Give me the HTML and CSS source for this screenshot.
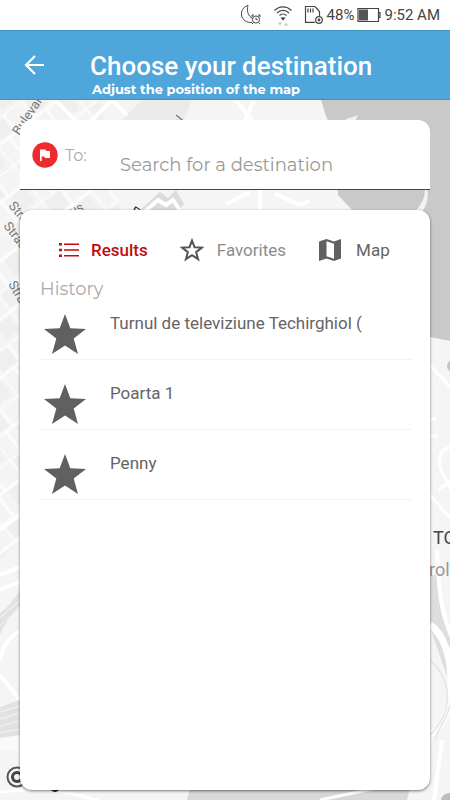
FILE: index.html
```html
<!DOCTYPE html>
<html lang="en">
<head>
<meta charset="utf-8">
<meta name="viewport" content="width=device-width, initial-scale=1">
<title>Choose your destination</title>
<link rel="stylesheet" href="styles.css">
</head>
<body>
<div class="status">
  <svg class="moon" width="22" height="22" viewBox="0 0 22 22" fill="none" stroke="#444">
    <path d="M8 1.500C3 3 1 7 1.500 11c.7 5 5.500 8 10.500 7.500M8 1.500C6.500 7 8 12 12.500 14.500"/>
    <circle cx="16" cy="15.500" r="3.600"/><path d="M16 13.500v2.200h1.700M12 13v-2h2M18 11h2v2M13 19l-1 1M19 19l1 1"/>
  </svg>
  <svg class="wifi" width="20" height="22" viewBox="0 0 20 22" fill="none" stroke="#444" stroke-width="1.300">
    <path d="M1.500 6.500C6.500 1.600 13.500 1.600 18.500 6.500M4 9c3.600-3.400 8.400-3.400 12 0M6.500 11.500c2-1.900 5-1.900 7 0"/>
    <path d="M7.500 13.500h5L10 16.500z" fill="#333" stroke="none"/>
    <path d="M5 18.500h4l-2 3zM11 21.500h4l-2-3z" fill="#c4c4c4" stroke="none"/>
  </svg>
  <svg class="sd" width="20" height="20" viewBox="0 0 20 20" fill="none" stroke="#444" stroke-width="1.200">
    <path d="M11 17.400H1.500V1.500H11l4.500 5V11M4 3.500v4M6.500 3.500v4M9 3.500v4"/>
    <circle cx="15" cy="15" r="3.300"/><circle cx="15" cy="15" r=".8"/>
  </svg>
  <span>48%</span>
  <svg class="battery" width="24" height="16" viewBox="0 0 24 16">
    <path d="M1 1.500h20.500v13H1zM21.500 5.500h1.500v5h-1.500" fill="none" stroke="#444" stroke-width="1.200"/>
    <path d="M2 2.500h9v11H2z" fill="#555"/>
  </svg>
  <span>9:52 AM</span>
</div>
<header class="bar">
  <button class="back" type="button" aria-label="Back">
    <svg width="22" height="22" viewBox="0 0 22 22" fill="none" stroke="#fff" stroke-width="2.200"><path d="M20 11H2.500M11 2L2 11l9 9"/></svg>
  </button>
  <div class="heading">
    <h1>Choose your destination</h1>
    <p>Adjust the position of the map</p>
  </div>
</header>
<main class="stage">
  <svg class="map" viewBox="0 100 450 700" preserveAspectRatio="xMidYMin slice" aria-hidden="true">
    <defs>
      <pattern id="streets" width="46" height="46" patternUnits="userSpaceOnUse" patternTransform="rotate(-38)">
        <path fill="#f4f4f4" d="M0 0h46v46H0z"/>
        <path fill="#efefef" d="M3 3h18v16H3zM26 24h16v18H26z"/>
        <path d="M0 0h46M0 22h46M0 0v46M24 0v22M15 22v24" fill="none" stroke="#fcfcfc" stroke-width="3"/>
      </pattern>
    </defs>
    <path fill="#f5f5f5" d="M0 100h450v700H0z"/>
    <path fill="url(#streets)" d="M0 100h100l20 112-100 38v290L0 560z"/>
    <path d="M55 100l22 22M90 122l22-22M112 100l22 22" fill="none" stroke="#fff" stroke-width="4"/>
    <path fill="#ebebeb" d="M122 120l20-20h50l-8 20z"/>
    <path fill="#dcdcdc" d="M140 210l20-18 8 6 8-8 8 14-6 8z"/>
    <path d="M142 214l16-14 8 5 7-5 8 12" fill="none" stroke="#fff" stroke-width="4"/>
    <path d="M234 98l18 22M255 98l-10 22M226 204l24-12M260 190v20M275 194c15 5 25 16 34 6" fill="none" stroke="#fff" stroke-width="4"/>
    <path fill="#c9c9c9" d="M321 100c4 12 5 20 13 30l4 65 15 16 77 128 20 2V100z"/>
    <path fill="#f2f2f2" d="M343 122c3-5 12-4 15-8l-3 8zM427 188h-3c3 8-4 18-9 24h7c5-7 7-15 5-24z"/>
    <path fill="#f5f5f5" d="M430 337l20 4v215l-20-3z"/>
    <path d="M430 365l22 24M430 420l6-2M430 437l8-2M455 448c-15-2-18 9-14 22l12 24M430 495l22 25M438 490l14-10" fill="none" stroke="#fff" stroke-width="3"/>
    <circle cx="453" cy="366" r="6" fill="#c4c4c4"/>
    <path fill="#dedede" d="M430 575h8c0 22 3 40 12 60v50l-20-58z"/>
    <path d="M430 625c28 18 28 95 0 110" fill="none" stroke="#fff" stroke-width="7"/>
    <path d="M430 660c20 18 26 48 0 75M435 740c4-18 22-24 18-80" fill="none" stroke="#e8e8e8" stroke-width="2"/>
    <path d="M437 550c2 35 2 60 16 90M442 740l-8 60" fill="none" stroke="#fff" stroke-width="4"/>
    <path d="M0 530l20-15M0 575l22-9M0 590l22-9M0 660c2-12 10-25 22-30M0 675l20 25" fill="none" stroke="#fff" stroke-width="4"/>
    <path fill="#e2e2e2" d="M0 613c8-6 13-12 20-23v16c-9 8-15 18-20 29zM0 707l20-7v50H0z"/>
    <path d="M0 618l20-18M0 626l20-18M0 712l20-6M0 719l20-6M0 726l20-5M0 733l20-4M0 740l20-3" fill="none" stroke="#f5f5f5"/>
    <path fill="#fafafa" d="M0 738l20-3v16H0z"/>
    <path fill="#d8d8d8" d="M190 788h220l-3 12H187z"/>
    <path d="M0 792c55-6 65 0 100 9M320 800l52-11" fill="none" stroke="#fff" stroke-width="3"/>
    <path fill="#bdbdbd" d="M441 800c1-5 5-7 9-7v7z"/>
    <g class="road">
      <text transform="translate(19 136) rotate(-56)">Bulevard</text>
      <text transform="translate(178 128) rotate(-50)">al</text>
      <text transform="translate(8 206) rotate(50)">Strada</text>
      <text transform="translate(3 226) rotate(53)">Strada</text>
      <text transform="translate(8 284) rotate(60)">Strada</text>
      <text transform="translate(72 216) rotate(-25)">us</text>
      <text class="dark" transform="translate(130 214) rotate(28)">P</text>
    </g>
    <text class="place" x="433" y="544">TO</text>
    <text class="place minor" x="429" y="576">rol</text>
    <circle cx="17" cy="777" r="9.500" fill="none" stroke="#555" stroke-width="2"/>
    <circle cx="17" cy="777" r="4.500" fill="none" stroke="#444" stroke-width="3"/>
    <circle cx="55" cy="787" r="5" fill="#222"/>
  </svg>

  <form class="search">
    <label for="destination">
      <svg width="26" height="26" viewBox="0 0 26 26"><circle cx="13" cy="13" r="12.700" fill="#ed2a2e"/><path d="M8 19V7.500h5.500l.8 1.500H18v7h-5l-.8-1.600H9.700V19z" fill="#fff"/></svg>
      To:
    </label>
    <input id="destination" type="text" placeholder="Search for a destination">
  </form>

  <section class="panel">
    <nav class="tabs">
      <button class="tab active" type="button">
        <svg width="20" height="14" viewBox="0 0 20 14"><path fill="#c20d10" d="M0 0h3v2.500H0zM0 5.800h3v2.500H0zM0 11.500h3V14H0zM5 .5h15v1.600H5zM5 6.200h15v1.600H5zM5 11.900h15v1.600H5z"/></svg>
        Results
      </button>
      <button class="tab muted" type="button">
        <svg width="24" height="24" viewBox="0 0 24 24" fill="none" stroke="#555" stroke-width="2"><path d="M12 2.500l2.500 6.700 7.300.4-5.700 4.500 2 7-6.100-4-6.100 4 2-7-5.700-4.500 7.300-.4z"/></svg>
        Favorites
      </button>
      <button class="tab" type="button">
        <svg width="24" height="24" viewBox="0 0 24 24"><path fill="#616161" fill-rule="evenodd" d="M1 3.500L8.500 1l7.500 2.500L23 1v19.500L16 23l-7.500-2.500L1 23zM8.500 3.300v14.900L16 20.700V5.800z"/></svg>
        Map
      </button>
    </nav>
    <h2>History</h2>
    <ul class="history">
      <li><svg width="42" height="40" viewBox="0 0 42 40"><path d="M21 0l5.300 14.200L42 15l-12.300 9.500L34 40l-13-8.500L8 40l4.300-15.500L0 15l15.700-.8z"/></svg><span>Turnul de televiziune Techirghiol (</span></li>
      <li><svg width="42" height="40" viewBox="0 0 42 40"><path d="M21 0l5.300 14.200L42 15l-12.300 9.500L34 40l-13-8.500L8 40l4.300-15.500L0 15l15.700-.8z"/></svg><span>Poarta 1</span></li>
      <li><svg width="42" height="40" viewBox="0 0 42 40"><path d="M21 0l5.300 14.200L42 15l-12.300 9.500L34 40l-13-8.500L8 40l4.300-15.500L0 15l15.700-.8z"/></svg><span>Penny</span></li>
    </ul>
  </section>
</main>
</body>
</html>
```
FILE: styles.css
```css
* {
  box-sizing: border-box;
}

body {
  margin: 0;
  min-height: 100vh;
  display: flex;
  flex-direction: column;
  font-family: Roboto, "Liberation Sans", sans-serif;
  color: #646464;
  background: #fff;
}

h1, h2, p, ul {
  margin: 0;
  padding: 0;
}

button, input {
  font: inherit;
  color: inherit;
  border: 0;
  padding: 0;
  background: none;
}

svg {
  flex: none;
}

.status {
  height: 30px;
  display: flex;
  align-items: center;
  justify-content: flex-end;
  gap: 3px;
  padding-right: 10px;
  font-size: 15px;
  color: #444;
}

.moon,
.wifi {
  margin-right: 8px;
}

.bar {
  height: 70px;
  display: flex;
  color: #fff;
  background: #4fa6db;
  border-top: 1px solid #3d93c8;
  border-bottom: 1px solid #3d93c8;
}

.back {
  width: 90px;
  padding-right: 20px;
}

.back svg {
  display: block;
  margin: 0 auto;
}

.heading {
  padding-top: 19px;
}

h1 {
  font-size: 26px;
  line-height: 32px;
  font-weight: 500;
}

.heading p {
  padding-left: 2px;
  font-family: Montserrat, Inter, sans-serif;
  font-size: 13px;
  line-height: 14px;
  font-weight: 700;
}

.stage {
  position: relative;
  flex: 1;
  display: flex;
  flex-direction: column;
  gap: 20px;
  padding: 20px 20px 10px;
  overflow: hidden;
}

.map {
  position: absolute;
  inset: 0;
  width: 100%;
  height: 100%;
}

.road {
  font-size: 13px;
  fill: #777;
}

.road .dark {
  fill: #222;
}

.place {
  font-size: 18px;
  fill: #444;
}

.place.minor {
  fill: #999;
}

.search,
.panel {
  position: relative;
  background: #fff;
}

.search {
  height: 70px;
  display: flex;
  border-radius: 12px 12px 0 0;
  border-bottom: 1px solid #444;
  font-family: Montserrat, Inter, sans-serif;
  color: #999;
}

.search label {
  width: 100px;
  height: 70px;
  display: flex;
  align-items: center;
  gap: 7px;
  padding-left: 12px;
  font-size: 16px;
  color: #aaa;
}

.search input {
  flex: 1;
  min-width: 0;
  padding-top: 20px;
  font-size: 18px;
  outline: 0;
}

.search input::placeholder {
  color: #999;
  opacity: 1;
}

.panel {
  flex: 1;
  padding: 24px 18px 20px 20px;
  border-radius: 12px;
  box-shadow: 0 1px 3px #0008;
}

.tabs {
  display: flex;
  gap: 32px;
  padding-left: 19px;
}

.tab {
  height: 32px;
  display: flex;
  align-items: center;
  gap: 12px;
  font-size: 17px;
}

.tab:last-child {
  gap: 14px;
}

.active {
  color: #c20d10;
  font-weight: 500;
}

.muted {
  gap: 13px;
  color: #8c8c8c;
}

h2 {
  padding-top: 13px;
  font-family: Montserrat, Inter, sans-serif;
  font-size: 18px;
  line-height: 20px;
  font-weight: 400;
  color: #aaa;
}

.history {
  list-style: none;
}

.history li {
  height: 70px;
  display: flex;
  align-items: flex-end;
  gap: 24px;
  padding: 0 4px 5px;
  border-bottom: 1px solid #f3f3f3;
  font-size: 17px;
  line-height: 20px;
}

.history li:first-child {
  height: 61px;
}

.history svg {
  fill: #606060;
}

.history li span {
  padding-bottom: 21px;
}
```
